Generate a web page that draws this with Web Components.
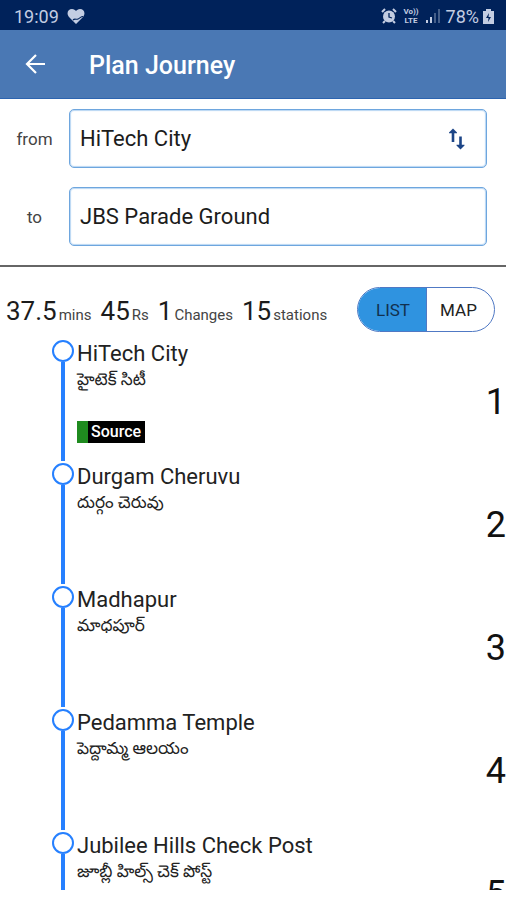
<!DOCTYPE html>
<html lang="en">
<head>
<meta charset="utf-8">
<meta name="viewport" content="width=device-width, initial-scale=1">
<title>Plan Journey</title>
<style>
  body {
    margin: 0;
    font-family: Roboto, "Noto Sans", "Noto Sans Telugu", sans-serif;
    color: #222;
    background: #fff;
    --navy: #00225a;
    --blue: #4a78b4;
    --field: #6ea6de;
    --line: #2680ff;
  }
</style>
</head>
<body>
<journey-app></journey-app>

<script>
class StatusBar extends HTMLElement {
  constructor() {
    super();
    this.attachShadow({ mode: 'open' });
    this.shadowRoot.innerHTML = `
      <style>
        :host {
          display: flex;
          align-items: center;
          justify-content: space-between;
          height: 30px;
          padding: 2px 12px 0 14px;
          box-sizing: border-box;
          background: var(--navy);
          color: #c3cde2;
          font-size: 18px;
        }
        div {
          display: flex;
          align-items: center;
          gap: 8px;
        }
        .right {
          gap: 6px;
        }
        .level {
          display: flex;
          align-items: center;
          gap: 4px;
        }
        .volte {
          display: grid;
          font-size: 8px;
          line-height: 9px;
          font-weight: 700;
          text-align: center;
        }
        svg {
          display: block;
          fill: currentColor;
        }
      </style>
      <div>
        <span>19:09</span>
        <svg width="18" height="17" viewBox="0 0 18 17">
          <path d="M9 16 2 9C-1 5 1 1 5 1c2 0 3 1 4 2 1-1 2-2 4-2 4 0 6 4 3 8z"/>
          <path d="M6 12c2-2 3 0 5-1s3-2.500 5-2.500" fill="none" stroke="#00225a" stroke-width="1.100"/>
        </svg>
      </div>
      <div class="right">
        <svg width="16" height="16" viewBox="0 0 16 16">
          <path d="M1 4 4 1M15 4l-3-3M4 13l-2 2M12 13l2 2" stroke="currentColor" stroke-width="2"/>
          <circle cx="8" cy="8.500" r="6"/>
          <path d="M8 5v4l3 1" fill="none" stroke="#00225a" stroke-width="1.300"/>
        </svg>
        <span class="volte"><span>Vo))</span><span>LTE</span></span>
        <svg width="15" height="14" viewBox="0 0 15 14">
          <path d="M1 11h2v3H1zM5 8h2v6H5z"/>
          <path d="M9 4h2v10H9zM13 0h2v14h-2z" opacity=".35"/>
        </svg>
        <div class="level">
          <span>78%</span>
          <svg width="11" height="15" viewBox="0 0 11 15">
            <path d="M3 0h5v2h3v13H0V2h3z"/>
            <path d="M6 4 3 9h2.500L5 13l3-5H5.500z" fill="#00225a"/>
          </svg>
        </div>
      </div>
    `;
  }
}

class AppHeader extends HTMLElement {
  constructor() {
    super();
    this.attachShadow({ mode: 'open' });
    this.shadowRoot.innerHTML = `
      <style>
        :host {
          display: flex;
          align-items: center;
          gap: 41px;
          height: 69px;
          padding: 2px 22px 0;
          box-sizing: border-box;
          background: var(--blue);
          border-bottom: 1px solid #2c64b0;
          color: #fff;
        }
        button {
          border: none;
          background: transparent;
          color: inherit;
          padding: 0;
          cursor: pointer;
        }
        svg {
          display: block;
        }
        h1 {
          margin: 0;
          font-size: 25px;
          font-weight: 500;
        }
      </style>
      <button type="button" aria-label="Back">
        <svg width="26" height="22" viewBox="0 0 26 22" fill="none" stroke="currentColor" stroke-width="2.200">
          <path d="M23 10H5M14 1 5 10l9 9"/>
        </svg>
      </button>
      <h1><slot></slot></h1>
    `;
  }
}

class JourneyField extends HTMLElement {
  constructor() {
    super();
    this.attachShadow({ mode: 'open' });
    this.shadowRoot.innerHTML = `
      <style>
        :host {
          display: grid;
          grid-template-columns: 69px 1fr;
          align-items: center;
        }
        label {
          text-align: center;
          font-size: 17px;
          color: #444;
        }
        .box {
          display: flex;
          align-items: center;
          height: 59px;
          box-sizing: border-box;
          padding: 0 20px 0 10px;
          border: 1px solid var(--field);
          border-radius: 5px;
          box-shadow: inset 0 0 1px 1px #b9d6f3;
        }
        input {
          flex: 1;
          min-width: 0;
          border: none;
          outline: none;
          padding: 0;
          font: inherit;
          font-size: 22px;
          color: #1c1c1c;
          background: transparent;
        }
      </style>
      <label for="station"></label>
      <div class="box">
        <input id="station" type="text">
        <slot></slot>
      </div>
    `;
  }

  connectedCallback() {
    this.shadowRoot.querySelector('label').textContent = this.getAttribute('label');
    this.shadowRoot.querySelector('input').value = this.getAttribute('value');
  }
}

class SwapButton extends HTMLElement {
  constructor() {
    super();
    this.attachShadow({ mode: 'open' });
    this.shadowRoot.innerHTML = `
      <style>
        :host {
          display: block;
        }
        button {
          display: block;
          border: none;
          background: transparent;
          padding: 0;
          color: #1c4587;
          cursor: pointer;
        }
        svg {
          display: block;
        }
      </style>
      <button type="button" aria-label="Swap stations">
        <svg width="18" height="22" viewBox="0 0 18 22" fill="currentColor">
          <path d="M5 0.500 9 4.500v.8H6.300V14H3.700V5.300H1v-.8z"/>
          <path d="M12.500 21.500 8.500 17.500v-.8h2.700V8.500h2.600v8.200h2.700v.8z"/>
        </svg>
      </button>
    `;
    this.shadowRoot.querySelector('button').addEventListener('click', () => {
      this.dispatchEvent(new CustomEvent('swap', { bubbles: true, composed: true }));
    });
  }
}

class JourneyStat extends HTMLElement {
  constructor() {
    super();
    this.attachShadow({ mode: 'open' });
    this.shadowRoot.innerHTML = `
      <style>
        :host {
          display: flex;
          align-items: baseline;
          gap: 2px;
          font-size: 15px;
          color: #444;
        }
        b {
          font-size: 26px;
          font-weight: 400;
          color: #1c1c1c;
        }
      </style>
      <b></b><span><slot></slot></span>
    `;
  }

  connectedCallback() {
    this.shadowRoot.querySelector('b').textContent = this.getAttribute('value');
  }
}

class ViewToggle extends HTMLElement {
  constructor() {
    super();
    this.attachShadow({ mode: 'open' });
    this.shadowRoot.innerHTML = `
      <style>
        :host {
          display: flex;
          height: 45px;
          box-sizing: border-box;
          border: 1px solid #5079c4;
          border-radius: 23px;
          overflow: hidden;
        }
        button {
          width: 68px;
          border: none;
          padding: 0;
          background: transparent;
          font: inherit;
          font-size: 17px;
          color: #222;
          cursor: pointer;
        }
        button:first-of-type {
          padding-left: 2px;
        }
        button + button {
          padding-right: 4px;
          border-left: 1px solid #5079c4;
        }
        button[aria-pressed="true"] {
          background: #2f93e0;
          color: #12304f;
        }
      </style>
      <button type="button" aria-pressed="true">LIST</button>
      <button type="button" aria-pressed="false">MAP</button>
    `;

    this.buttons = this.shadowRoot.querySelectorAll('button');
    this.buttons.forEach(button => {
      button.addEventListener('click', this.select.bind(this));
    });
  }

  select(event) {
    this.buttons.forEach(button => {
      button.setAttribute('aria-pressed', button === event.target);
    });
  }
}

class StationStop extends HTMLElement {
  constructor() {
    super();
    this.attachShadow({ mode: 'open' });
    this.shadowRoot.innerHTML = `
      <style>
        :host {
          display: grid;
          grid-template-columns: 24px 1fr auto;
          column-gap: 2px;
          height: 123px;
          padding-left: 51px;
        }
        .track {
          display: flex;
          flex-direction: column;
          align-items: center;
          padding-bottom: 2px;
        }
        .dot {
          width: 22px;
          height: 22px;
          box-sizing: border-box;
          border: 2px solid var(--line);
          border-radius: 50%;
        }
        .rail {
          flex: 1;
          width: 4px;
          background: var(--line);
        }
        .name {
          font-size: 22px;
          line-height: 27px;
        }
        .local {
          font-size: 17px;
          line-height: 24px;
        }
        .number {
          align-self: center;
          font-size: 36px;
          color: #111;
        }
      </style>
      <div class="track"><div class="dot"></div><div class="rail"></div></div>
      <div>
        <div class="name"></div>
        <div class="local" lang="te"></div>
        <slot></slot>
      </div>
      <div class="number"></div>
    `;
  }

  connectedCallback() {
    this.shadowRoot.querySelector('.name').textContent = this.getAttribute('name');
    this.shadowRoot.querySelector('.local').textContent = this.getAttribute('local');
    this.shadowRoot.querySelector('.number').textContent = this.getAttribute('number');
  }
}

class StopTag extends HTMLElement {
  constructor() {
    super();
    this.attachShadow({ mode: 'open' });
    this.shadowRoot.innerHTML = `
      <style>
        :host {
          display: block;
          width: fit-content;
          margin-top: 30px;
          padding: 0 4px 0 3px;
          border-left: 11px solid #1f8b1f;
          background: #000;
          color: #fff;
          font-size: 16px;
          font-weight: 500;
          line-height: 22px;
        }
      </style>
      <slot></slot>
    `;
  }
}

class JourneyApp extends HTMLElement {
  constructor() {
    super();
    this.attachShadow({ mode: 'open' });
    this.shadowRoot.innerHTML = `
      <style>
        :host {
          display: flex;
          flex-direction: column;
          height: 100vh;
          box-sizing: border-box;
          padding-bottom: 10px;
        }
        form {
          display: grid;
          gap: 19px;
          padding: 10px 19px 19px 0;
          border-bottom: 2px solid #666;
        }
        .summary {
          display: flex;
          align-items: center;
          justify-content: space-between;
          padding: 20px 11px 8px 6px;
        }
        .stats {
          display: flex;
          align-items: baseline;
          gap: 9px;
          padding-top: 2px;
        }
        main {
          flex: 1;
          min-height: 0;
          overflow: hidden;
        }
      </style>
      <status-bar></status-bar>
      <app-header>Plan Journey</app-header>
      <form>
        <journey-field label="from" value="HiTech City"><swap-button></swap-button></journey-field>
        <journey-field label="to" value="JBS Parade Ground"></journey-field>
      </form>
      <div class="summary">
        <div class="stats">
          <journey-stat value="37.5">mins</journey-stat>
          <journey-stat value="45">Rs</journey-stat>
          <journey-stat value="1">Changes</journey-stat>
          <journey-stat value="15">stations</journey-stat>
        </div>
        <view-toggle></view-toggle>
      </div>
      <main>
        <station-stop number="1" name="HiTech City" local="హైటెక్ సిటీ"><stop-tag>Source</stop-tag></station-stop>
        <station-stop number="2" name="Durgam Cheruvu" local="దుర్గం చెరువు"></station-stop>
        <station-stop number="3" name="Madhapur" local="మాధపూర్"></station-stop>
        <station-stop number="4" name="Pedamma Temple" local="పెద్దామ్మ ఆలయం"></station-stop>
        <station-stop number="5" name="Jubilee Hills Check Post" local="జూబ్లీ హిల్స్ చెక్ పోస్ట్"></station-stop>
      </main>
    `;
    this.addEventListener('swap', this.swapStations.bind(this));
  }

  swapStations() {
    const [from, to] = [...this.shadowRoot.querySelectorAll('journey-field')]
      .map(field => field.shadowRoot.querySelector('input'));
    [from.value, to.value] = [to.value, from.value];
  }
}

customElements.define('status-bar', StatusBar);
customElements.define('app-header', AppHeader);
customElements.define('journey-field', JourneyField);
customElements.define('swap-button', SwapButton);
customElements.define('journey-stat', JourneyStat);
customElements.define('view-toggle', ViewToggle);
customElements.define('station-stop', StationStop);
customElements.define('stop-tag', StopTag);
customElements.define('journey-app', JourneyApp);
</script>
</body>
</html>
